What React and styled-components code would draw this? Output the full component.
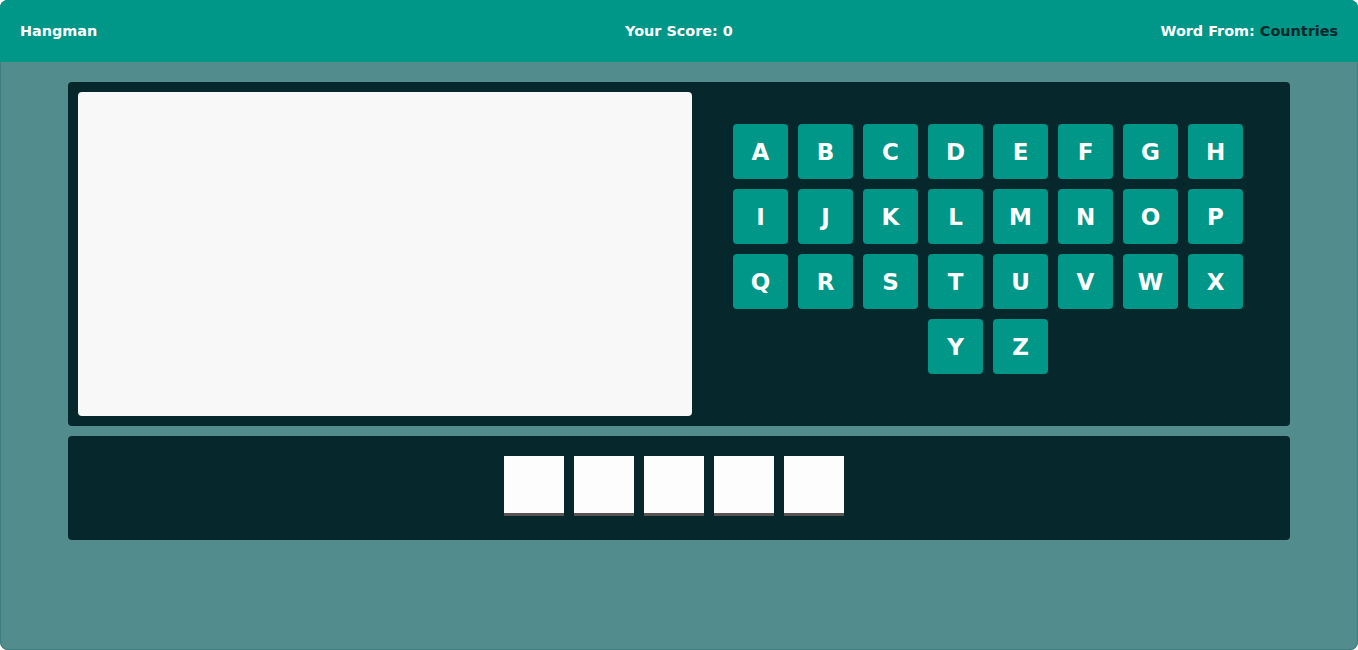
import React from 'react';
import styled, {createGlobalStyle} from 'styled-components';

const GlobalStyle = createGlobalStyle`
  html, body {
    margin: 0;
    padding: 0;
    background: #ffffff;
  }
  body {
    font-family: "DejaVu Sans", Verdana, sans-serif;
  }
`;

const Page = styled.div`
  height: 650px;
  background: #528c8c;
  box-shadow: inset 0 0 0 1px #3f7e7e;
  border-radius: 8px;
  overflow: hidden;
`;

const Header = styled.header`
  height: 62px;
  background: #009688;
  display: grid;
  grid-template-columns: 1fr auto 1fr;
  align-items: center;
  padding: 0 20px;
  color: #ffffff;
  font-weight: bold;
  font-size: 14.4px;
`;

const HeaderItem = styled.span`
  justify-self: ${p => p.$align || 'start'};
`;

const Accent = styled.span`
  color: #06272b;
`;

const Main = styled.main`
  width: 90%;
  margin: 20px auto 0;
  display: flex;
  flex-direction: column;
  gap: 10px;
`;

const Panel = styled.section`
  background: #06272b;
  border-radius: 4px;
  padding: 10px;
  display: flex;
`;

const Board = styled.div`
  width: 614px;
  height: 324px;
  background: #f8f8f8;
  border-radius: 4px;
  flex: none;
`;

const Keys = styled.div`
  flex: 1;
  display: flex;
  align-items: flex-start;
  justify-content: center;
  padding: 32px 0 0 4px;
`;

const KeyGrid = styled.div`
  width: 520px;
  display: flex;
  flex-wrap: wrap;
  justify-content: center;
  gap: 10px;
`;

const Key = styled.button`
  width: 55px;
  height: 55px;
  border: none;
  border-radius: 4px;
  background: #009688;
  color: #ffffff;
  font-family: "DejaVu Sans", Verdana, sans-serif;
  font-weight: bold;
  font-size: 23px;
  padding: 0;
  cursor: pointer;
`;

const WordPanel = styled(Panel)`
  justify-content: center;
  padding: 20px 10px 24px;
`;

const Slot = styled.div`
  width: 60px;
  height: 57px;
  background: #fdfdfd;
  border-bottom: 3px solid #5a5353;
  margin-right: 10px;
`;

const letters = 'ABCDEFGHIJKLMNOPQRSTUVWXYZ'.split('');

export default function App() {
  return (
    <Page>
      <GlobalStyle />
      <Header>
        <HeaderItem>Hangman</HeaderItem>
        <HeaderItem $align="center">Your Score: 0</HeaderItem>
        <HeaderItem $align="end">Word From: <Accent>Countries</Accent></HeaderItem>
      </Header>
      <Main>
        <Panel>
          <Board />
          <Keys>
            <KeyGrid>
              {letters.map(l => <Key key={l}>{l}</Key>)}
            </KeyGrid>
          </Keys>
        </Panel>
        <WordPanel>
          {[0, 1, 2, 3, 4].map(i => <Slot key={i} />)}
        </WordPanel>
      </Main>
    </Page>
  );
}
